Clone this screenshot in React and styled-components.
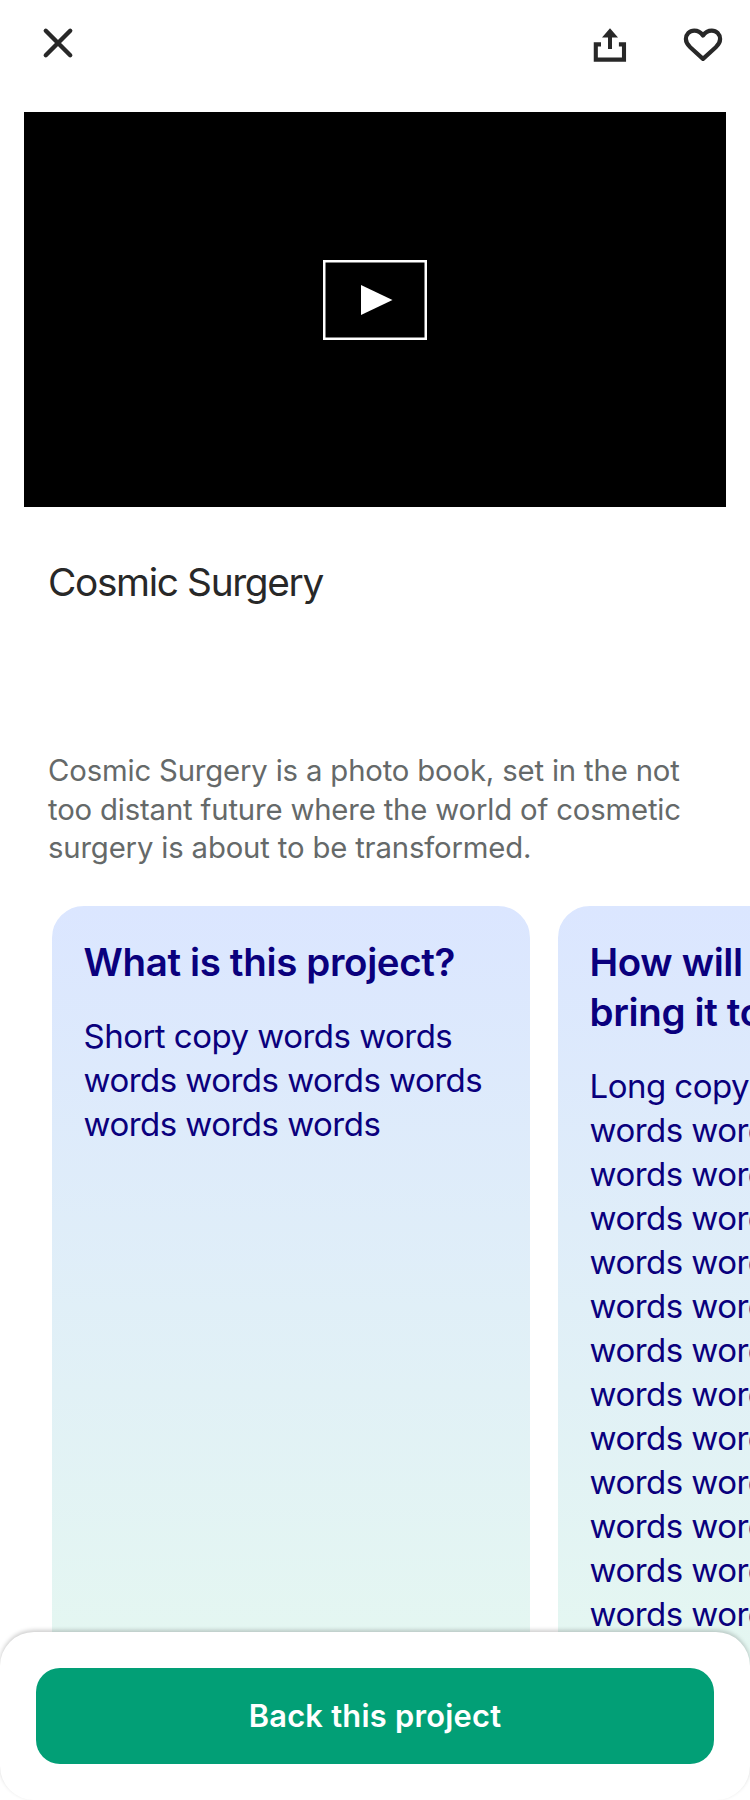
import React from "react";
import styled, { createGlobalStyle } from "styled-components";

const GlobalStyle = createGlobalStyle`
  * { box-sizing: border-box; }
  body {
    margin: 0;
    background: #ffffff;
    font-family: Inter, "Liberation Sans", sans-serif;
    -webkit-font-smoothing: antialiased;
  }
  h1, h2, p { margin: 0; }
`;

const Screen = styled.main`
  position: relative;
  width: 750px;
  height: 1800px;
  overflow: hidden;
  background: #ffffff;
  color: #282828;
`;

const TopBar = styled.header`
  display: flex;
  align-items: flex-start;
  height: 112px;
  padding: 20px 23px 0 34px;
`;

const IconButton = styled.button`
  width: 48px;
  height: 48px;
  padding: 0;
  border: 0;
  background: none;
  color: inherit;
  margin-left: ${(p) => p.$before || "0"};

  svg { display: block; }
`;

const Video = styled.section`
  display: flex;
  align-items: center;
  justify-content: center;
  width: 702px;
  height: 395px;
  margin: 0 auto;
  background: #000000;
`;

const PlayButton = styled.button`
  display: block;
  width: 104px;
  height: 80px;
  padding: 0;
  border: 0;
  margin-bottom: 19px;
  background: none;

  svg { display: block; }
`;

const Title = styled.h1`
  margin: 51px 48px 0;
  font-size: 38.8px;
  font-weight: 400;
  line-height: 48px;
  letter-spacing: -1.35px;
`;

const Blurb = styled.p`
  margin: 146px 48px 0;
  font-size: 29.3px;
  line-height: 38.5px;
  letter-spacing: -0.16px;
  color: #656969;
  white-space: nowrap;
`;

const Carousel = styled.section`
  display: flex;
  gap: 20px;
  width: max-content;
  padding: 0 48px;
  margin-top: 34px;
`;

const Card = styled.article`
  width: 486px;
  height: 860px;
  padding: 30px;
  border: 4px solid #ffffff;
  border-radius: 36px;
  background: linear-gradient(180deg, #dbe6ff 0%, #e5f8f0 94%);
  color: #0a007d;
`;

const CardTitle = styled.h2`
  margin: 1px 0 0 1.5px;
  font-size: 38.5px;
  font-weight: 600;
  line-height: 50px;
  letter-spacing: -0.35px;
  white-space: nowrap;
`;

const CardText = styled.p`
  margin: 27px 0 0 1.5px;
  font-size: 33px;
  line-height: 44px;
  letter-spacing: -0.52px;
  white-space: nowrap;
`;

const Footer = styled.footer`
  position: absolute;
  left: 0;
  right: 0;
  bottom: 0;
  height: 168px;
  padding: 36px;
  border-radius: 34px;
  background: #ffffff;
  box-shadow: 0 -2px 4px rgba(0, 0, 0, 0.2);
`;

const BackButton = styled.button`
  display: block;
  width: 100%;
  height: 96px;
  padding: 0;
  border: 0;
  border-radius: 24px;
  background: #029f76;
  color: #ffffff;
  font: 600 30.8px/96px Inter, "Liberation Sans", sans-serif;
  letter-spacing: 0.25px;
`;

const CloseIcon = () => (
  <svg width="48" height="48" viewBox="0 0 48 48" fill="none" stroke="currentColor" strokeWidth="4.4" strokeLinecap="round">
    <path d="M11.8 10.8L36.2 35.2M36.2 10.8L11.8 35.2" />
  </svg>
);

const ShareIcon = () => (
  <svg width="48" height="48" viewBox="0 0 48 48" fill="none">
    <path d="M15 24.4H9.8V39.6H38V24.4H32.9" stroke="currentColor" strokeWidth="4.1" />
    <path d="M24 8.2L32 17.4H26V29H22V17.4H16Z" fill="currentColor" />
  </svg>
);

const HeartIcon = () => (
  <svg width="48" height="48" viewBox="0 0 48 48" fill="none" stroke="currentColor" strokeWidth="4.2" strokeLinejoin="round">
    <path d="M24 38.9L11.2 27.2C8.5 24.7 6.9 22 6.9 19C6.9 14.3 10.5 10.6 15.2 10.6C18.8 10.6 21.9 12.4 24 15.5C26.1 12.4 29.2 10.6 32.8 10.6C37.5 10.6 41.1 14.3 41.1 19C41.1 22 39.5 24.7 36.8 27.2Z" />
  </svg>
);

const PlayIcon = () => (
  <svg width="104" height="80" viewBox="0 0 104 80">
    <rect x="1.25" y="1.25" width="101.5" height="77.5" fill="none" stroke="#fff" strokeWidth="2.5" />
    <path d="M38 25L69.5 40L38 55Z" fill="#fff" />
  </svg>
);

const cards = [
  {
    title: ["What is this project?"],
    text: ["Short copy words words", "words words words words", "words words words"],
  },
  {
    title: ["How will you", "bring it to life?"],
    text: ["Long copy words words", ...Array(12).fill("words words words words")],
  },
];

const Lines = ({ items }) =>
  items.map((line, i) => (
    <React.Fragment key={i}>
      {i > 0 && <br />}
      {line}
    </React.Fragment>
  ));

export default function App() {
  return (
    <Screen>
      <GlobalStyle />
      <TopBar>
        <IconButton aria-label="Close"><CloseIcon /></IconButton>
        <IconButton aria-label="Share" $before="auto"><ShareIcon /></IconButton>
        <IconButton aria-label="Save" $before="45px"><HeartIcon /></IconButton>
      </TopBar>
      <Video>
        <PlayButton aria-label="Play video"><PlayIcon /></PlayButton>
      </Video>
      <Title>Cosmic Surgery</Title>
      <Blurb>
        <Lines
          items={[
            "Cosmic Surgery is a photo book, set in the not",
            "too distant future where the world of cosmetic",
            "surgery is about to be transformed.",
          ]}
        />
      </Blurb>
      <Carousel>
        {cards.map((card) => (
          <Card key={card.title[0]}>
            <CardTitle><Lines items={card.title} /></CardTitle>
            <CardText><Lines items={card.text} /></CardText>
          </Card>
        ))}
      </Carousel>
      <Footer>
        <BackButton>Back this project</BackButton>
      </Footer>
    </Screen>
  );
}
